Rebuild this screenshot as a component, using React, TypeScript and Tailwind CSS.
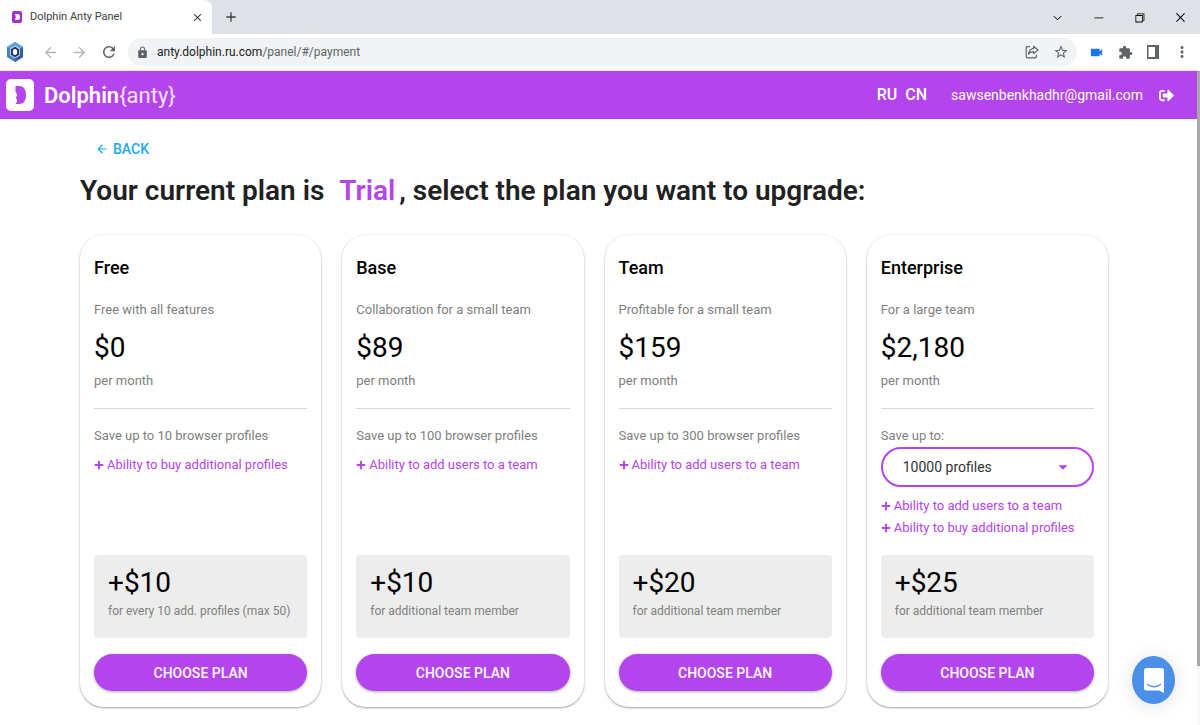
import React from "react";
import {
  MdAdd,
  MdArrowBack,
  MdArrowDropDown,
  MdArrowForward,
  MdClose,
  MdExtension,
  MdLock,
  MdMoreVert,
  MdRefresh,
  MdStarBorder,
  MdVideocam,
} from "react-icons/md";
import { FaPlus, FaSignOutAlt } from "react-icons/fa";
import { VscChevronDown, VscChromeClose, VscChromeMinimize, VscChromeRestore } from "react-icons/vsc";

interface IPlan {
  name: string;
  description: string;
  price: string;
  save: string;
  options?: string[];
  features: string[];
  extraPrice: string;
  extraText: string;
}

const plans: IPlan[] = [
  {
    name: "Free",
    description: "Free with all features",
    price: "$0",
    save: "Save up to 10 browser profiles",
    features: ["Ability to buy additional profiles"],
    extraPrice: "+$10",
    extraText: "for every 10 add. profiles (max 50)",
  },
  {
    name: "Base",
    description: "Collaboration for a small team",
    price: "$89",
    save: "Save up to 100 browser profiles",
    features: ["Ability to add users to a team"],
    extraPrice: "+$10",
    extraText: "for additional team member",
  },
  {
    name: "Team",
    description: "Profitable for a small team",
    price: "$159",
    save: "Save up to 300 browser profiles",
    features: ["Ability to add users to a team"],
    extraPrice: "+$20",
    extraText: "for additional team member",
  },
  {
    name: "Enterprise",
    description: "For a large team",
    price: "$2,180",
    save: "Save up to:",
    options: ["10000 profiles"],
    features: ["Ability to add users to a team", "Ability to buy additional profiles"],
    extraPrice: "+$25",
    extraText: "for additional team member",
  },
];

const HexIcon = () => (
  <svg width="18" height="20" viewBox="0 0 18 20">
    <path d="M9 0 17 5v10l-8 5-8-5V5z" fill="#3f83c9" />
    <path d="M9 0 17 5l-3 2-5-3-5 3-3-2z" fill="#5ea3e0" />
    <path d="M17 5v10l-8 5v-4l5-3V7z" fill="#2c5f9e" />
    <path d="M9 3.500l5 3v7l-5 3-5-3v-7z" fill="#b9cbe6" />
    <path d="M9 4.800l4 2.500v5.400l-4 2.500-4-2.500V7.300z" fill="#25305c" />
    <ellipse cx="9" cy="10" rx="2.200" ry="2.900" fill="#fff" />
  </svg>
);

const ShareIcon = () => (
  <svg width="14" height="14" viewBox="0 0 14 14" fill="none" stroke="#5f6368" strokeWidth="1.2">
    <path d="M5 1.6H2.5a1.3 1.3 0 0 0-1.3 1.3v8.6a1.3 1.3 0 0 0 1.3 1.3h7.6a1.3 1.3 0 0 0 1.3-1.3V10" />
    <path d="M8.6 1.3 13 5 8.6 8.6V6.6C6 6.6 4.6 7.5 3.6 9.3 3.9 6 5.5 3.8 8.6 3.4z" strokeLinejoin="round" />
  </svg>
);

const SidePanelIcon = () => (
  <svg width="12" height="14" viewBox="0 0 12 14">
    <path d="M0 0h12v14H0zM1.5 2v10H8V2z" fill="#5f6368" fillRule="evenodd" />
  </svg>
);

const DolphinMark = ({ className }: { className?: string }) => (
  <svg viewBox="0 0 28 32" className={className}>
    <rect width="28" height="32" rx="5" fill="currentColor" />
    <path
      d="M9.500 7h3.500c4.500 0 7 3.300 7 9s-2.500 9-7 9H9.500c1.200-1.300 1.700-2.600 1.500-4-.2-1.300-.9-1.900-1.800-2.500 1-.3 1.600-.9 1.800-2 .3-1.700-1.500-2.500-1.500-4.500z"
      fill="#b444ec"
    />
  </svg>
);

const BrowserBar = () => {
  return (
    <div className="text-xs text-[#3c4043]">
      <div className="flex h-[34px] items-center bg-[#dee1e6]">
        <div className="flex h-full w-[212px] items-center rounded-tr-lg bg-white pl-3 pr-2">
          <svg width="10" height="12" viewBox="0 0 10 12">
            <rect width="10" height="12" rx="2" fill="#a52fd0" />
            <path d="M3 3h2.5c2 0 2.5 1.3 2.5 3s-.5 3-2.500 3H3l.8-3z" fill="#fff" />
          </svg>
          <span className="ml-2 flex-1 text-[11px]">Dolphin Anty Panel</span>
          <button aria-label="Close tab">
            <MdClose size={13} />
          </button>
        </div>
        <button aria-label="New tab" className="ml-[11px]">
          <MdAdd size={16} />
        </button>
        <div className="ml-auto flex items-center gap-x-7 pr-[13px] text-black">
          <button aria-label="Search tabs">
            <VscChevronDown size={13} />
          </button>
          <button aria-label="Minimize">
            <VscChromeMinimize size={13} />
          </button>
          <button aria-label="Restore">
            <VscChromeRestore size={13} />
          </button>
          <button aria-label="Close">
            <VscChromeClose size={13} />
          </button>
        </div>
      </div>
      <div className="flex h-[37px] items-center border-b border-gray-200 bg-white pl-1.5 pr-[9px]">
        <HexIcon />
        <div className="ml-4.5 flex items-center gap-x-3 text-[#5f6368]">
          <button aria-label="Back" className="text-[#b4b7ba]">
            <MdArrowBack size={17} />
          </button>
          <button aria-label="Forward" className="text-[#b4b7ba]">
            <MdArrowForward size={17} />
          </button>
          <button aria-label="Reload">
            <MdRefresh size={18} />
          </button>
        </div>
        <div className="ml-2.5 flex h-7 flex-1 items-center rounded-full bg-[#f1f3f4] px-2 text-[#5f6368]">
          <MdLock size={13} />
          <span className="ml-2 flex-1">
            <span className="text-[#202124]">anty.dolphin.ru.com</span>/panel/#/payment
          </span>
          <button aria-label="Share">
            <ShareIcon />
          </button>
          <button aria-label="Bookmark" className="ml-3.5">
            <MdStarBorder size={16} />
          </button>
        </div>
        <div className="ml-3 flex items-center gap-x-3.5 text-[#5f6368]">
          <MdVideocam size={15} className="text-[#1a73e8]" />
          <MdExtension size={15} />
          <SidePanelIcon />
          <button aria-label="Menu">
            <MdMoreVert size={18} />
          </button>
        </div>
      </div>
    </div>
  );
};

const Header = () => {
  return (
    <header className="flex h-12 items-center justify-between bg-[#b444ec] pl-1.5 pr-[23px] text-white">
      <a href="#" className="flex items-center gap-x-2.5">
        <DolphinMark className="h-8 w-7" />
        <span className="text-[22px] font-semibold">
          Dolphin<span className="font-normal text-white/85">{"{anty}"}</span>
        </span>
      </a>
      <div className="flex items-center">
        <nav className="flex gap-x-2 text-base font-medium">
          <a href="#ru">RU</a>
          <a href="#cn">CN</a>
        </nav>
        <span className="ml-6 text-sm">sawsenbenkhadhr@gmail.com</span>
        <button aria-label="Log out" className="ml-4">
          <FaSignOutAlt size={15} />
        </button>
      </div>
    </header>
  );
};

const PlanCard = ({ plan }: { plan: IPlan }) => {
  return (
    <article className="flex flex-col rounded-3xl bg-white px-3.5 pb-4 pt-[21px] text-[13px] leading-5 text-[#808080] shadow-[0_1px_2px_rgba(0,0,0,0.35),0_0_3px_rgba(0,0,0,0.06)]">
      <h2 className="text-lg leading-6 font-medium text-black">{plan.name}</h2>
      <p className="mt-5">{plan.description}</p>
      <p className="mt-2 text-[28px] leading-10 text-black">{plan.price}</p>
      <p className="mt-[3px]">per month</p>
      <hr className="my-[17px] border-[#d8d8d8]" />
      {plan.options ? (
        <>
          <label htmlFor="profiles">{plan.save}</label>
          <div className="relative mt-px">
            <select
              id="profiles"
              className="h-10 w-full appearance-none rounded-full border-2 border-[#b444ec] bg-white pl-5 text-sm text-[#333]"
            >
              {plan.options.map((option) => (
                <option key={option}>{option}</option>
              ))}
            </select>
            <MdArrowDropDown
              size={22}
              className="pointer-events-none absolute right-5 top-1/2 -translate-y-1/2 text-[#b444ec]"
            />
          </div>
        </>
      ) : (
        <p>{plan.save}</p>
      )}
      <ul className="mt-2 text-[#b444ec]">
        {plan.features.map((feature) => (
          <li key={feature} className="flex items-center gap-x-[3px] leading-[22px]">
            <FaPlus size={10} />
            {feature}
          </li>
        ))}
      </ul>
      <div className="mt-auto pt-4">
        <div className="h-[83px] rounded bg-[#ededed] px-3.5 pt-2">
          <p className="text-[28px] leading-10 text-black">{plan.extraPrice}</p>
          <p className="text-xs leading-4">{plan.extraText}</p>
        </div>
        <button className="mt-4 block h-[37px] w-full rounded-full bg-[#b444ec] text-sm font-semibold text-white/95 shadow-[0_1px_3px_rgba(0,0,0,0.35)]">
          CHOOSE PLAN
        </button>
      </div>
    </article>
  );
};

const App = () => {
  return (
    <div className="flex min-h-screen flex-col bg-white font-['Roboto',sans-serif]">
      <BrowserBar />
      <div className="flex flex-1">
        <div className="flex-1">
          <Header />
          <main className="pb-4 pl-20 pr-[89px] pt-5">
            <a href="#back" className="ml-[15px] flex w-fit items-center gap-x-1 text-sm leading-5 font-medium text-[#1eaaea]">
              <MdArrowBack size={14} />
              BACK
            </a>
            <h1 className="mt-3 text-[28px] leading-10 font-semibold text-[#212121]">
              Your current plan is <span className="ml-2 mr-1 text-[#b444ec]">Trial</span>, select the plan you want to upgrade:
            </h1>
            <div className="mt-6 grid grid-cols-4 gap-x-[21px]">
              {plans.map((plan) => (
                <PlanCard key={plan.name} plan={plan} />
              ))}
            </div>
          </main>
        </div>
        <div className="w-[3px] bg-[#f8f8f8]">
          <div className="h-[91%] bg-[#a9a9a9]" />
        </div>
      </div>
      <button
        aria-label="Open chat"
        className="fixed bottom-[21px] right-[25px] flex h-12 w-[43px] items-center justify-center rounded-[50%] bg-[#4a90e8] shadow-[0_2px_20px_rgba(0,0,0,0.12)]"
      >
        <svg width="20" height="25" viewBox="0 0 20 25">
          <path d="M2.500 0h15A2.500 2.500 0 0 1 20 2.500V25l-5-2.500H2.500A2.500 2.500 0 0 1 0 20V2.500A2.500 2.500 0 0 1 2.500 0z" fill="#fff" />
          <path d="M3.5 16.500c3.800 3 9.200 3 13 0" fill="none" stroke="#4a90e8" strokeWidth="1.300" strokeLinecap="round" />
        </svg>
      </button>
    </div>
  );
};

export default App;
